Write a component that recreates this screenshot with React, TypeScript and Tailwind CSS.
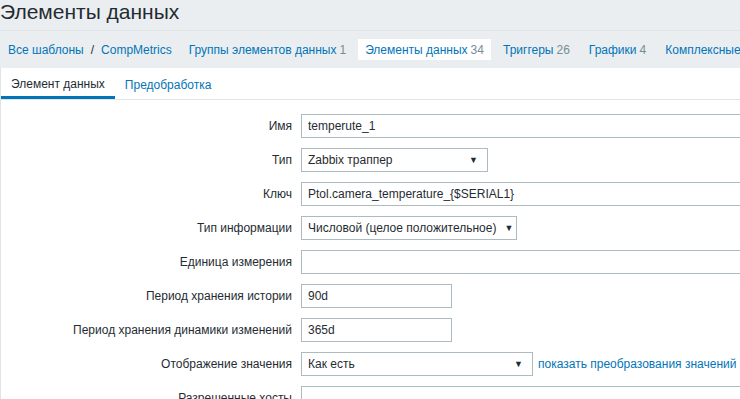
import React from "react";

const font = { fontFamily: '"Liberation Sans", Arial, sans-serif' };

type NavTab = { label: string; count?: number; active?: boolean };

const navTabs: NavTab[] = [
  { label: "Группы элементов данных", count: 1 },
  { label: "Элементы данных", count: 34, active: true },
  { label: "Триггеры", count: 26 },
  { label: "Графики", count: 4 },
  { label: "Комплексные экраны", count: 0 },
];

const Arrow = () => (
  <span className="ml-auto pl-2 text-[9px] leading-none text-[#1f2c33]">▼</span>
);

const Row = ({ label, children }: { label: string; children: React.ReactNode }) => (
  <div className="flex items-center">
    <div className="w-[291px] shrink-0 whitespace-nowrap text-right text-[#1f2c33]">{label}</div>
    <div className="ml-[9px] flex items-center">{children}</div>
  </div>
);

const TextInput = ({ value = "", width }: { value?: string; width: string }) => (
  <div className={`${width} flex h-[24px] items-center whitespace-nowrap border border-[#acbbc2] bg-white px-[6px] text-[#1f2c33]`}>
    {value}
  </div>
);

const Select = ({ value, width }: { value: string; width: string }) => (
  <div className={`${width} flex h-[24px] items-center whitespace-nowrap border border-[#acbbc2] bg-white pl-[6px] pr-[9px] text-[#1f2c33]`}>
    <span>{value}</span>
    <Arrow />
  </div>
);

export default function App() {
  return (
    <div className="h-[399px] w-[740px] overflow-hidden bg-[#ebeef0] text-[12px]" style={font}>
      <div className="border-b border-[#dfe4e7] pb-[6px]">
        <h1 className="text-[21px] leading-[24px] text-[#1f2c33]">Элементы данных</h1>
      </div>

      <div className="flex h-[37px] items-center whitespace-nowrap pl-[8px]">
        <a className="text-[#0275b8]">Все шаблоны</a>
        <span className="mx-[7px] text-[#1f2c33]">/</span>
        <a className="text-[#0275b8]">CompMetrics</a>
        <div className="ml-[10px] flex items-center gap-[5px]">
          {navTabs.map((t) => (
            <div
              key={t.label}
              className={`flex h-[21px] items-center px-[7px] ${t.active ? "bg-white" : ""}`}
            >
              <span className="text-[#0275b8]">{t.label}</span>
              <span className="ml-[3px] text-[#768d99]">{t.count}</span>
            </div>
          ))}
        </div>
      </div>

      <div className="w-[760px] border-l border-[#dfe4e7] bg-white">
        <div className="flex h-[32px] border-b border-[#dfe4e7]">
          <div className="flex items-center border-b-[3px] border-[#0275b8] px-[10px] pt-[3px] text-[#1f2c33]">
            Элемент данных
          </div>
          <div className="flex items-center px-[10px] pt-[3px] text-[#0275b8]">Предобработка</div>
        </div>

        <div className="flex flex-col gap-[10px] pt-[14px]">
          <Row label="Имя">
            <TextInput value="temperute_1" width="w-[460px]" />
          </Row>
          <Row label="Тип">
            <Select value="Zabbix траппер" width="w-[187px]" />
          </Row>
          <Row label="Ключ">
            <TextInput value="Ptol.camera_temperature_{$SERIAL1}" width="w-[460px]" />
          </Row>
          <Row label="Тип информации">
            <Select value="Числовой (целое положительное)" width="w-[216px]" />
          </Row>
          <Row label="Единица измерения">
            <TextInput width="w-[460px]" />
          </Row>
          <Row label="Период хранения истории">
            <TextInput value="90d" width="w-[151px]" />
          </Row>
          <Row label="Период хранения динамики изменений">
            <TextInput value="365d" width="w-[151px]" />
          </Row>
          <Row label="Отображение значения">
            <Select value="Как есть" width="w-[232px]" />
            <a className="ml-[5px] whitespace-nowrap text-[#0275b8]">показать преобразования значений</a>
          </Row>
          <Row label="Разрешенные хосты">
            <TextInput width="w-[460px]" />
          </Row>
        </div>
      </div>
    </div>
  );
}
